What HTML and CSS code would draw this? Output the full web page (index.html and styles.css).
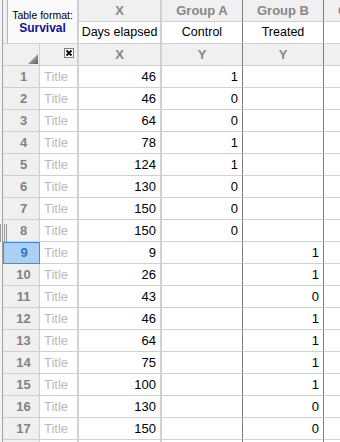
FILE: index.html
```html
<!DOCTYPE html>
<html lang="en">
<head>
<meta charset="UTF-8">
<title>Survival table</title>
<link rel="stylesheet" href="styles.css">
</head>
<body>
<div class="window">
  <div class="gutter"></div>
  <div class="grip"></div>

  <div class="sheet">
    <!-- header -->
    <div class="cell format">
      <div class="format-label">Table format:</div>
      <div class="format-name">Survival</div>
    </div>
    <div class="cell head xcol">X</div>
    <div class="cell head grp">Group A</div>
    <div class="cell head grp">Group B</div>
    <div class="cell head grp">Group C</div>

    <div class="cell label xcol">Days elapsed</div>
    <div class="cell label grp">Control</div>
    <div class="cell label grp">Treated</div>
    <div class="cell label grp"></div>

    <div class="cell corner">
      <svg width="10" height="10" viewBox="0 0 10 10">
        <defs>
          <linearGradient id="tri" x1="0" y1="0" x2="1" y2="1">
            <stop offset="0" stop-color="#d8d8d8"/>
            <stop offset="1" stop-color="#5a5a5a"/>
          </linearGradient>
        </defs>
        <polygon points="10,0 10,10 0,10" fill="url(#tri)"/>
      </svg>
    </div>
    <div class="cell titlehead">
      <span class="xbox">
        <svg width="8" height="8" viewBox="0 0 8 8"><path d="M1.5 1.5 L6.5 6.5 M6.5 1.5 L1.5 6.5" stroke="#000" stroke-width="1.8"/></svg>
      </span>
    </div>
    <div class="cell head xcol">X</div>
    <div class="cell head grp">Y</div>
    <div class="cell head grp">Y</div>
    <div class="cell head grp">Y</div>

    <!-- data rows -->
    <div class="cell num">1</div><div class="cell title">Title</div><div class="cell val xcol">46</div><div class="cell val grp">1</div><div class="cell val grp"></div><div class="cell val grp"></div>
    <div class="cell num">2</div><div class="cell title">Title</div><div class="cell val xcol">46</div><div class="cell val grp">0</div><div class="cell val grp"></div><div class="cell val grp"></div>
    <div class="cell num">3</div><div class="cell title">Title</div><div class="cell val xcol">64</div><div class="cell val grp">0</div><div class="cell val grp"></div><div class="cell val grp"></div>
    <div class="cell num">4</div><div class="cell title">Title</div><div class="cell val xcol">78</div><div class="cell val grp">1</div><div class="cell val grp"></div><div class="cell val grp"></div>
    <div class="cell num">5</div><div class="cell title">Title</div><div class="cell val xcol">124</div><div class="cell val grp">1</div><div class="cell val grp"></div><div class="cell val grp"></div>
    <div class="cell num">6</div><div class="cell title">Title</div><div class="cell val xcol">130</div><div class="cell val grp">0</div><div class="cell val grp"></div><div class="cell val grp"></div>
    <div class="cell num">7</div><div class="cell title">Title</div><div class="cell val xcol">150</div><div class="cell val grp">0</div><div class="cell val grp"></div><div class="cell val grp"></div>
    <div class="cell num">8</div><div class="cell title">Title</div><div class="cell val xcol">150</div><div class="cell val grp">0</div><div class="cell val grp"></div><div class="cell val grp"></div>
    <div class="cell num sel">9</div><div class="cell title">Title</div><div class="cell val xcol">9</div><div class="cell val grp"></div><div class="cell val grp">1</div><div class="cell val grp"></div>
    <div class="cell num">10</div><div class="cell title">Title</div><div class="cell val xcol">26</div><div class="cell val grp"></div><div class="cell val grp">1</div><div class="cell val grp"></div>
    <div class="cell num">11</div><div class="cell title">Title</div><div class="cell val xcol">43</div><div class="cell val grp"></div><div class="cell val grp">0</div><div class="cell val grp"></div>
    <div class="cell num">12</div><div class="cell title">Title</div><div class="cell val xcol">46</div><div class="cell val grp"></div><div class="cell val grp">1</div><div class="cell val grp"></div>
    <div class="cell num">13</div><div class="cell title">Title</div><div class="cell val xcol">64</div><div class="cell val grp"></div><div class="cell val grp">1</div><div class="cell val grp"></div>
    <div class="cell num">14</div><div class="cell title">Title</div><div class="cell val xcol">75</div><div class="cell val grp"></div><div class="cell val grp">1</div><div class="cell val grp"></div>
    <div class="cell num">15</div><div class="cell title">Title</div><div class="cell val xcol">100</div><div class="cell val grp"></div><div class="cell val grp">1</div><div class="cell val grp"></div>
    <div class="cell num">16</div><div class="cell title">Title</div><div class="cell val xcol">130</div><div class="cell val grp"></div><div class="cell val grp">0</div><div class="cell val grp"></div>
    <div class="cell num">17</div><div class="cell title">Title</div><div class="cell val xcol">150</div><div class="cell val grp"></div><div class="cell val grp">0</div><div class="cell val grp"></div>
    <div class="cell num"></div><div class="cell title"></div><div class="cell val xcol"></div><div class="cell val grp"></div><div class="cell val grp"></div><div class="cell val grp"></div>
  </div>
</div>
</body>
</html>
```

FILE: styles.css
```css
body {
  margin: 0;
  font-family: "Liberation Sans", Arial, sans-serif;
  font-size: 13px;
  background: #fff;
  overflow: hidden;
}

.window {
  display: flex;
  height: 442px;
  position: relative;
  overflow: hidden;
}

.gutter {
  width: 2px;
  flex: none;
  background: #f4f4f4;
  border-right: 1px solid #a0a0a0;
}

/* splitter grip on the left edge */
.grip {
  position: absolute;
  left: 0;
  top: 224px;
  width: 7px;
  height: 18px;
  background: repeating-linear-gradient(to right, #9a9a9a 0 1px, transparent 1px 2px);
}

.sheet {
  display: grid;
  grid-template-columns: 37px 39px 83px 81px 81px 81px;
  grid-auto-rows: 22px;
  flex: none;
}

.cell {
  box-sizing: border-box;
  border-right: 1px solid #d0d0d0;
  border-bottom: 1px solid #d0d0d0;
  line-height: 21px;
  padding: 0 4px;
  white-space: nowrap;
  overflow: hidden;
}

.format {
  grid-column: 1 / 3;
  grid-row: 1 / 3;
  border-right-width: 2px;
  padding: 9px 0 0 5px;
  text-align: center;
  background: linear-gradient(to right, #f0f0f0 4px, #b4b4b4 4px 5px, #fafafa 5px);
}
.format-label {
  font-size: 10.5px;
  line-height: 13px;
  color: #000;
}
.format-name {
  font-size: 12px;
  line-height: 13px;
  font-weight: bold;
  color: #10109c;
}

.head {
  background: #f0f0f0;
  color: #878787;
  font-weight: bold;
  text-align: center;
}

.label {
  background: #fff;
  color: #000;
  text-align: center;
  font-size: 12.5px;
  padding: 0 2px;
}

.xcol {
  border-right-width: 2px;
}
.grp {
  border-right-color: #808080;
}

.corner {
  background: #f0f0f0;
  display: flex;
  justify-content: flex-end;
  align-items: flex-end;
  padding: 0 1px 1px 0;
}
.corner svg {
  display: block;
}

.titlehead {
  background: #f0f0f0;
  border-right-width: 2px;
  display: flex;
  justify-content: flex-end;
  align-items: flex-start;
  padding: 4px 3px 0 0;
}
.xbox {
  box-sizing: border-box;
  width: 10px;
  height: 10px;
  border: 1px solid #808080;
  background: #fff;
  display: flex;
  align-items: center;
  justify-content: center;
}
.xbox svg {
  display: block;
}

.num {
  background: #f0f0f0;
  color: #828282;
  font-weight: bold;
  text-align: center;
  padding: 0 0 0 5px;
}
.num.sel {
  background: #aad1f4;
  color: #2a74c4;
  border: 1px solid #3d8ee0;
  line-height: 20px;
}

.title {
  color: #bababa;
  border-right-width: 2px;
}

.val {
  text-align: right;
  color: #000;
}
```
